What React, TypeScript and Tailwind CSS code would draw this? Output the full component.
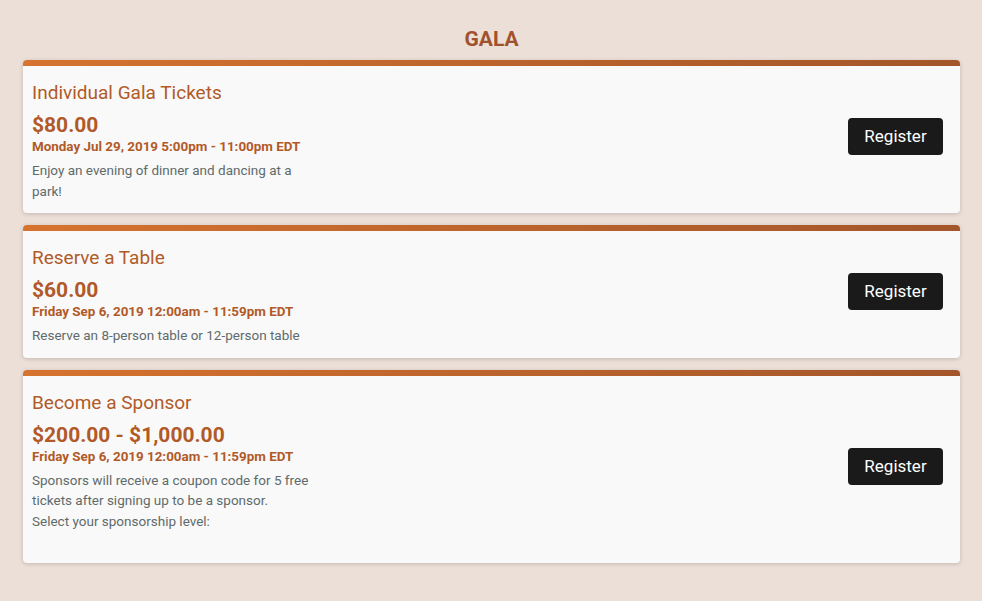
import React from "react";

const events = [
  {
    name: "Individual Gala Tickets",
    price: "$80.00",
    date: "Monday Jul 29, 2019 5:00pm - 11:00pm EDT",
    description: ["Enjoy an evening of dinner and dancing at a park!"],
    extra: false,
  },
  {
    name: "Reserve a Table",
    price: "$60.00",
    date: "Friday Sep 6, 2019 12:00am - 11:59pm EDT",
    description: ["Reserve an 8-person table or 12-person table"],
    extra: false,
  },
  {
    name: "Become a Sponsor",
    price: "$200.00 - $1,000.00",
    date: "Friday Sep 6, 2019 12:00am - 11:59pm EDT",
    description: [
      "Sponsors will receive a coupon code for 5 free tickets after signing up to be a sponsor.",
      "Select your sponsorship level:",
    ],
    extra: true,
  },
];

function EventCard({ event }: { event: (typeof events)[number] }) {
  return (
    <div className="bg-[#f9f9f9] rounded-[4px] overflow-hidden shadow-[0_1px_4px_rgba(0,0,0,0.18)]">
      <div className="h-[6px] bg-gradient-to-r from-[#d6732f] to-[#a3562a]" />
      <div className="flex items-center justify-between pl-[9px] pr-[17px]">
        <div className="pt-[15px] pb-[12px]">
          <div className="text-[19px] leading-[24px] text-[#b15a28] mb-[7px]">
            {event.name}
          </div>
          <div className="text-[21px] leading-[26px] font-bold text-[#b15a28] mb-[1px]">
            {event.price}
          </div>
          <div className="text-[13.4px] leading-[16px] font-bold text-[#b15a28] mb-[5px]">
            {event.date}
          </div>
          <div className="w-[280px] text-[13.5px] leading-[20.5px] text-[#5f6b6b]">
            {event.description.map((line, i) => (
              <div key={i}>{line}</div>
            ))}
          </div>
          {event.extra && <div className="h-5" />}
        </div>
        <button className="mb-[6px] w-[95px] h-[37px] rounded-[4px] bg-[#1b1a1a] text-white text-[17px]">
          Register
        </button>
      </div>
    </div>
  );
}

export default function App() {
  return (
    <div className="min-h-[601px] bg-[#ecdfd8] pl-[23px] pr-[22px] pt-[25px] pb-9 font-['Roboto',sans-serif]">
      <h1 className="text-center text-[21px] leading-[28px] font-bold text-[#a0522d] mb-[7px]">
        GALA
      </h1>
      <div className="flex flex-col gap-3">
        {events.map((event) => (
          <EventCard key={event.name} event={event} />
        ))}
      </div>
    </div>
  );
}
